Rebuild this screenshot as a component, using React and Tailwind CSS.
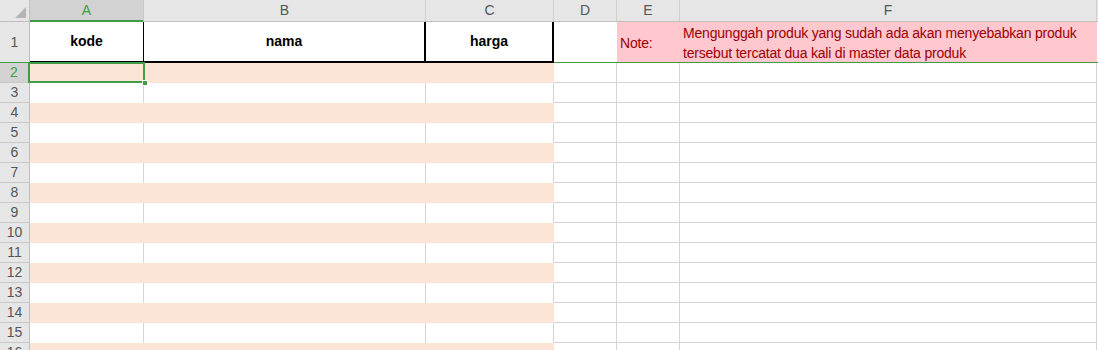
import React from 'react';

// column layout of the sheet: letter, width class, whether the body is part of the banded table
const columns = [
  { key: 'A', w: 'w-[114px]', table: true },
  { key: 'B', w: 'w-[282px]', table: true },
  { key: 'C', w: 'w-[128px]', table: true },
  { key: 'D', w: 'w-[63px]', table: false },
  { key: 'E', w: 'w-[63px]', table: false },
  { key: 'F', w: 'w-[417px]', table: false },
];

const rows = [2, 3, 4, 5, 6, 7, 8, 9, 10, 11, 12, 13, 14, 15, 16];

function ColumnHeader() {
  return (
    <div className="flex h-[22px] border-b border-[#bfbfbf] bg-[#e6e6e6]">
      {/* select-all corner */}
      <div className="relative w-[30px] shrink-0 border-r border-[#bfbfbf]">
        <svg className="absolute left-[15px] top-[7px]" width="11" height="11" viewBox="0 0 11 11">
          <polygon points="11,0 11,11 0,11" fill="#b4b4b4" />
        </svg>
      </div>
      {columns.map((c) =>
        c.key === 'A' ? (
          <div
            key={c.key}
            className={`${c.w} relative shrink-0 border-r border-[#c8c8c8] bg-[#d2d2d2] text-center text-[14px] leading-[21px] text-[#3f9e45]`}
          >
            {c.key}
            <div className="absolute -bottom-[1px] left-0 right-0 h-[2px] bg-[#3f9e45]" />
          </div>
        ) : (
          <div
            key={c.key}
            className={`${c.w} shrink-0 border-r border-[#d0d0d0] text-center text-[14px] leading-[21px] text-[#555]`}
          >
            {c.key}
          </div>
        )
      )}
      <div className="flex-1" />
    </div>
  );
}

function TitleRow() {
  return (
    <div className="flex h-[41px]">
      <div className="flex w-[30px] shrink-0 items-center justify-center border-r border-b border-r-[#bfbfbf] border-b-[#3f9e45] bg-[#e6e6e6] text-[14px] text-[#555]">
        1
      </div>
      <div className="flex w-[114px] shrink-0 items-center justify-center border-r border-b-2 border-black bg-white text-[14px] font-bold text-black">
        kode
      </div>
      <div className="flex w-[282px] shrink-0 items-center justify-center border-r-2 border-b-2 border-black bg-white text-[14px] font-bold text-black">
        nama
      </div>
      <div className="flex w-[128px] shrink-0 items-center justify-center border-r-2 border-b-2 border-black bg-white text-[14px] font-bold text-black">
        harga
      </div>
      <div className="w-[63px] shrink-0 border-b border-[#3f9e45] bg-white" />
      <div className="flex w-[63px] shrink-0 items-center border-b border-[#3f9e45] bg-[#ffc7ce] pl-[3px] pt-[2px] text-[14px] tracking-[-0.2px] text-[#9c0006]">
        Note:
      </div>
      <div className="flex w-[417px] shrink-0 items-center border-b border-[#3f9e45] bg-[#ffc7ce] pl-[3px] pt-[1px] text-[14px] leading-[20px] tracking-[-0.2px] text-[#9c0006]">
        Mengunggah produk yang sudah ada akan menyebabkan produk tersebut tercatat dua kali di master data produk
      </div>
      <div className="flex-1 border-b border-[#3f9e45] bg-white" />
    </div>
  );
}

function BodyRow({ n }) {
  const banded = n % 2 === 0;
  const selected = n === 2;
  return (
    <div className="flex h-[20px]">
      <div
        className={`flex w-[30px] shrink-0 items-center justify-center border-b border-b-[#c8c8c8] text-[14px] ${
          selected
            ? 'border-r-2 border-r-[#3f9e45] bg-[#d2d2d2] text-[#3f9e45]'
            : 'border-r border-r-[#bfbfbf] bg-[#e6e6e6] text-[#555]'
        }`}
      >
        {n}
      </div>
      {columns.map((c) => {
        if (c.table) {
          return (
            <div
              key={c.key}
              className={`${c.w} relative shrink-0 ${
                banded ? 'bg-[#fce4d6]' : 'border-r border-[#d4d4d4] bg-white'
              }`}
            >
              {selected && c.key === 'A' && (
                <div className="absolute -left-[2px] -top-[1px] -right-[1px] bottom-0 z-10 border-2 border-[#3f9e45]">
                  <div className="absolute -bottom-[5px] -right-[5px] h-[6px] w-[6px] border border-white bg-[#3f9e45]" />
                </div>
              )}
            </div>
          );
        }
        return <div key={c.key} className={`${c.w} shrink-0 border-r border-b border-[#d4d4d4] bg-white`} />;
      })}
      <div className="flex-1 bg-white" />
    </div>
  );
}

export default function App() {
  return (
    <div className="h-[350px] w-[1098px] overflow-hidden bg-white font-['Liberation_Sans',Arial,sans-serif]">
      <ColumnHeader />
      <TitleRow />
      {rows.map((n) => (
        <BodyRow key={n} n={n} />
      ))}
    </div>
  );
}
